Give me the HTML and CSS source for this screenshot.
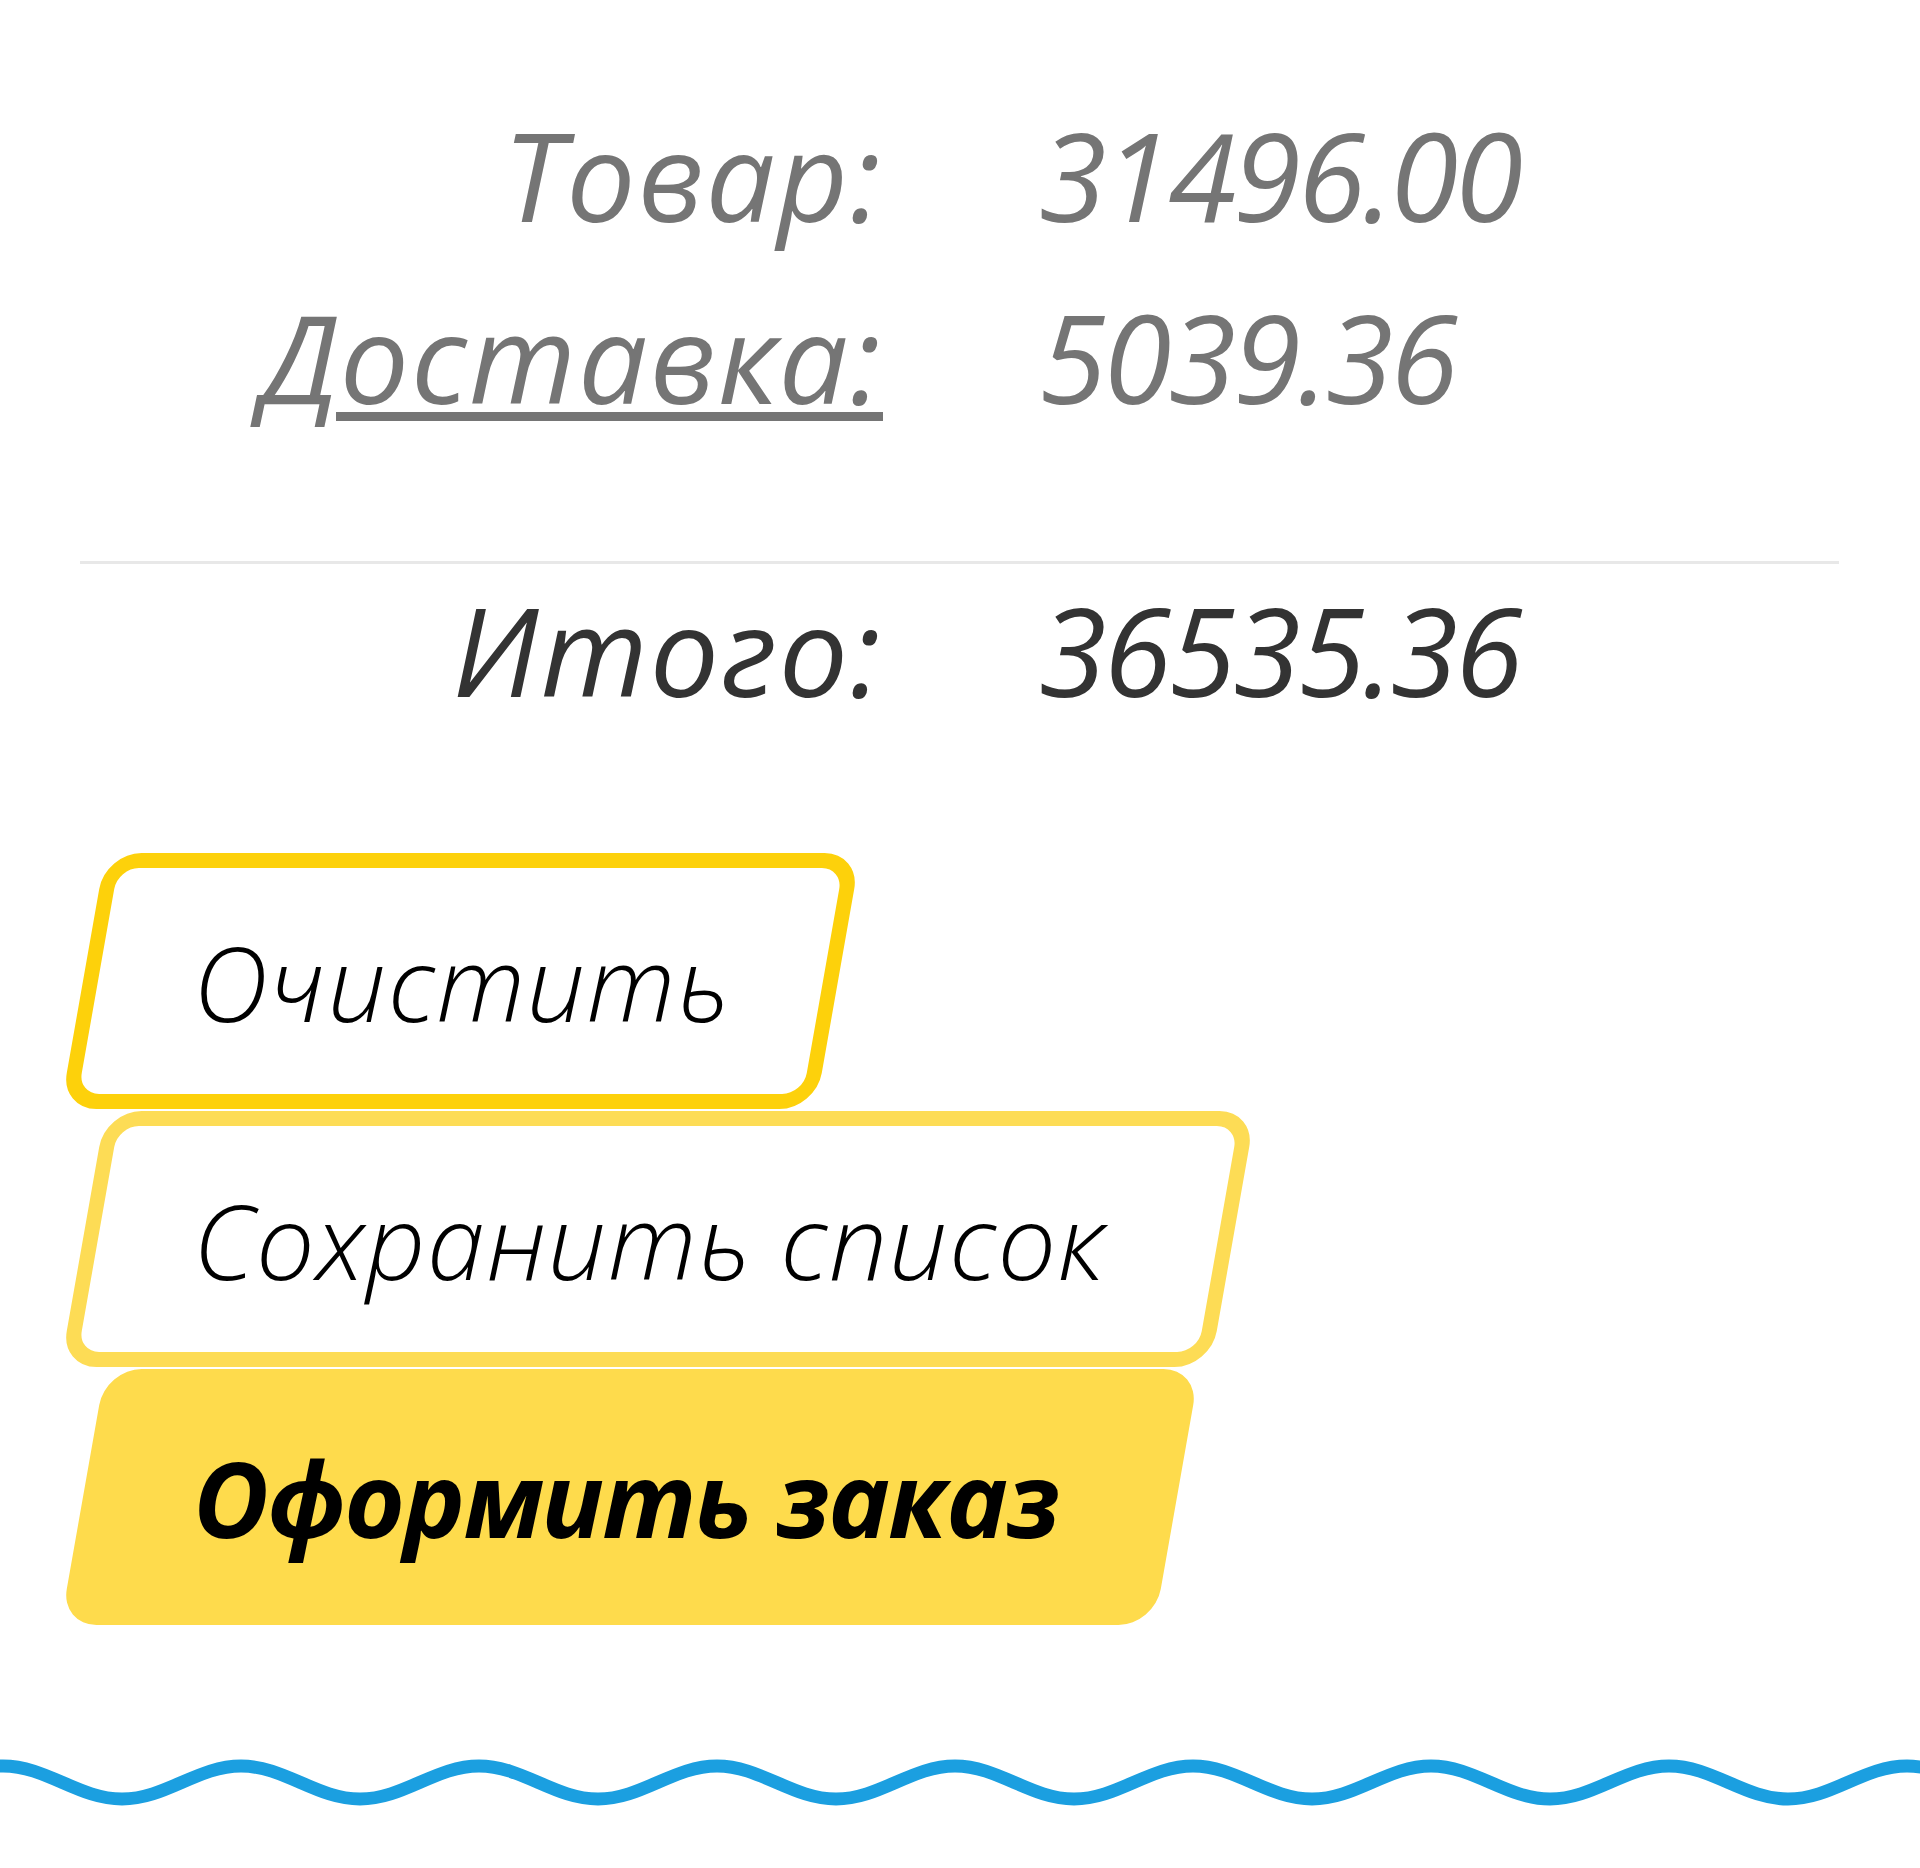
FILE: index.html
```html
<!DOCTYPE html>
<html lang="ru">
<head>
    <meta charset="UTF-8">
    <meta name="viewport" content="width=device-width, initial-scale=1.0">
    <title>Корзина</title>
    <link rel="stylesheet" href="styles.css">
</head>
<body>
    <div class="summary">
        <div class="row">
            <span class="label">Товар:</span>
            <span class="value">31496.00</span>
        </div>
        <div class="row">
            <a class="label link" href="#delivery">Доставка:</a>
            <span class="value">5039.36</span>
        </div>
        <hr class="divider">
        <div class="row total">
            <span class="label">Итого:</span>
            <span class="value">36535.36</span>
        </div>
    </div>

    <div class="actions">
        <button class="btn btn-clear">Очистить</button>
        <button class="btn btn-save">Сохранить список</button>
        <button class="btn btn-order">Оформить заказ</button>
    </div>

    <svg class="wave" width="1920" height="66" viewBox="0 0 1920 66">
        <path d="M -235 16 c 43.2 0 75.8 33 119 33 s 75.8 -33 119 -33 s 75.8 33 119 33 s 75.8 -33 119 -33 s 75.8 33 119 33 s 75.8 -33 119 -33 s 75.8 33 119 33 s 75.8 -33 119 -33 s 75.8 33 119 33 s 75.8 -33 119 -33 s 75.8 33 119 33 s 75.8 -33 119 -33 s 75.8 33 119 33 s 75.8 -33 119 -33 s 75.8 33 119 33 s 75.8 -33 119 -33 s 75.8 33 119 33 s 75.8 -33 119 -33 s 75.8 33 119 33 s 75.8 -33 119 -33"
              fill="none" stroke="#1b9fe0" stroke-width="13"/>
    </svg>
</body>
</html>
```

FILE: styles.css
```css
body {
    margin: 0;
    padding: 0;
    background-color: #fff;
    font-family: "Open Sans", "Noto Sans", sans-serif;
    font-style: italic;
}
.summary {
    padding-top: 84px;
}
.row {
    display: grid;
    grid-template-columns: 1fr 1fr;
    column-gap: 158px;
    font-size: 123px;
    font-weight: 400;
    line-height: 182px;
    color: #757575;
}
.label {
    text-align: right;
    letter-spacing: 2px;
    margin-right: -2px;
}
.value {
    letter-spacing: -3px;
}
.link {
    color: #757575;
    text-decoration: underline;
    text-decoration-thickness: 9px;
    text-underline-offset: 8px;
}
.divider {
    height: 0;
    margin: 113px 81px 0 80px;
    border: none;
    border-top: 3px solid #e8e8e8;
}
.row.total {
    margin-top: 11px;
    line-height: 150px;
    color: #333;
}
.actions {
    display: flex;
    flex-direction: column;
    align-items: flex-start;
    gap: 2px;
    margin-top: 128px;
    padding-left: 83px;
}
.btn {
    position: relative;
    z-index: 0;
    display: flex;
    align-items: center;
    height: 256px;
    padding: 0 0 0 110px;
    border: none;
    background: transparent;
    font-family: inherit;
    font-style: italic;
    font-size: 104px;
    font-weight: 300;
    letter-spacing: 1.5px;
    color: #000;
    cursor: pointer;
}
.btn::before {
    content: "";
    position: absolute;
    inset: 0;
    z-index: -1;
    border-radius: 36px;
    transform: skewX(-10deg);
}
.btn-clear {
    width: 755px;
}
.btn-clear::before {
    border: 15px solid #fdd10b;
}
.btn-save {
    width: 1150px;
}
.btn-save::before {
    border: 15px solid #fddc55;
}
.btn-order {
    width: 1094px;
    font-weight: 700;
    letter-spacing: -2px;
}
.btn-order::before {
    background-color: #fedb4c;
}
.wave {
    display: block;
    margin-top: 125px;
}
```
